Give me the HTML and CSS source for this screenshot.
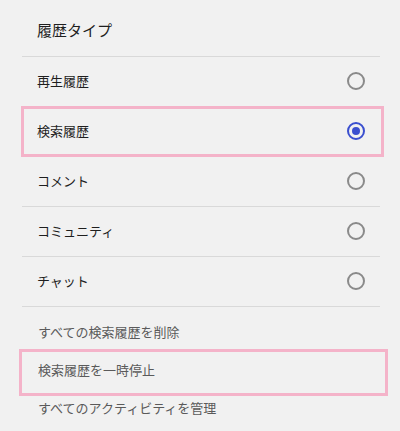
FILE: index.html
```html
<!DOCTYPE html>
<html lang="ja">
<head>
<meta charset="utf-8">
<link rel="stylesheet" href="styles.css">
</head>
<body>
<div class="panel">
  <div class="title">履歴タイプ</div>
  <div class="row"><span class="label">再生履歴</span><span class="radio"></span></div>
  <div class="row mark"><span class="label">検索履歴</span><span class="radio on"></span></div>
  <div class="row"><span class="label">コメント</span><span class="radio"></span></div>
  <div class="row"><span class="label">コミュニティ</span><span class="radio"></span></div>
  <div class="row"><span class="label">チャット</span><span class="radio"></span></div>
  <div class="links">
    <div class="link">すべての検索履歴を削除</div>
    <div class="link mark2">検索履歴を一時停止</div>
    <div class="link">すべてのアクティビティを管理</div>
  </div>
</div>
</body>
</html>
```
FILE: styles.css
```css
html, body {
  margin: 0;
  padding: 0;
  background: #f1f1f1;
}
body {
  font-family: "Noto Sans CJK JP", "Noto Sans", sans-serif;
  width: 400px;
  height: 431px;
  overflow: hidden;
}
.panel {
  margin: 0 20px 0 22px;
}
.title {
  height: 57px;
  padding-top: 3px;
  box-sizing: border-box;
  display: flex;
  align-items: center;
  padding-left: 15px;
  font-size: 15px;
  color: #1e1e1e;
  border-bottom: 1px solid #d9d9d9;
}
.row {
  position: relative;
  height: 50px;
  box-sizing: border-box;
  border-bottom: 1px solid #d9d9d9;
  display: flex;
  align-items: center;
  justify-content: space-between;
  padding: 0 15px 2px 15px;
  font-size: 13px;
  color: #1e1e1e;
}
.radio {
  width: 18px;
  height: 18px;
  box-sizing: border-box;
  border: 2px solid #8a8a8a;
  border-radius: 50%;
  display: flex;
  align-items: center;
  justify-content: center;
}
.radio.on {
  border-color: #3a4fcf;
}
.radio.on::after {
  content: "";
  width: 8px;
  height: 8px;
  border-radius: 50%;
  background: #3a4fcf;
}
.mark::before {
  content: "";
  position: absolute;
  left: -1px;
  right: -4px;
  top: -1px;
  bottom: -1px;
  border: 3px solid #f4b3c9;
}
.links {
  padding-top: 6px;
}
.link {
  position: relative;
  height: 38px;
  box-sizing: border-box;
  padding-bottom: 1px;
  display: flex;
  align-items: center;
  padding-left: 16px;
  font-size: 13px;
  color: #5a5a5a;
}
.mark2::before {
  content: "";
  position: absolute;
  left: -3px;
  right: -8px;
  top: -2px;
  bottom: -7px;
  border: 3px solid #f4b3c9;
}
```
